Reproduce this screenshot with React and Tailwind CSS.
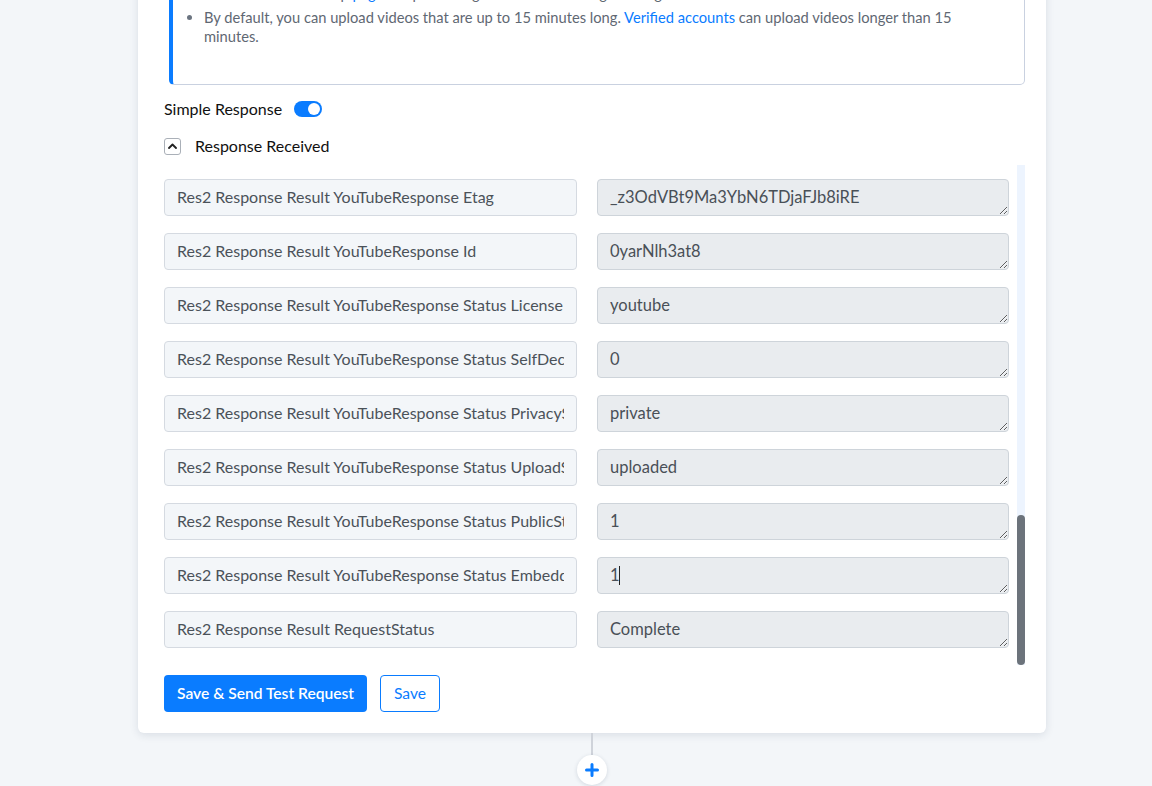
import React from "react";

const rows = [
  ["Res2 Response Result YouTubeResponse Etag", "_z3OdVBt9Ma3YbN6TDjaFJb8iRE"],
  ["Res2 Response Result YouTubeResponse Id", "0yarNlh3at8"],
  ["Res2 Response Result YouTubeResponse Status License", "youtube"],
  ["Res2 Response Result YouTubeResponse Status SelfDeclaredMadeForKids", "0"],
  ["Res2 Response Result YouTubeResponse Status PrivacyStatus", "private"],
  ["Res2 Response Result YouTubeResponse Status UploadStatus", "uploaded"],
  ["Res2 Response Result YouTubeResponse Status PublicStatsViewable", "1"],
  ["Res2 Response Result YouTubeResponse Status Embeddable", "1", true],
  ["Res2 Response Result RequestStatus", "Complete"],
];

const font = { fontFamily: "Lato, 'Open Sans', sans-serif" };

function Row({ label, value, caret }) {
  return (
    <div className="flex gap-[20px]">
      <input
        readOnly
        value={label}
        className="h-[37px] w-[413px] shrink-0 rounded-[4px] border border-[#d5dae1] bg-[#f3f6f9] px-[12px] pb-[2px] text-[16px] text-[#4b5259] outline-none"
        style={font}
      />
      <div className="relative">
        <textarea
          readOnly
          value={value}
          rows={1}
          className="block h-[37px] w-[412px] rounded-[4px] border border-[#ced4da] bg-[#e9ecef] px-[12px] py-[7px] text-[16.5px] leading-[21px] text-[#495057] outline-none"
          style={font}
        />
        {caret && (
          <span className="absolute left-[22px] top-[9px] h-[19px] w-px bg-[#222]" />
        )}
      </div>
    </div>
  );
}

export default function App() {
  return (
    <div className="min-h-[786px] overflow-hidden bg-[#f3f6f9]" style={font}>
      <div className="relative ml-[138px] -mt-[47px] w-[908px]">
        <div className="rounded-b-[6px] bg-white pb-[21px] pl-[26px] pr-[21px] pt-[20px] shadow-[0_2px_8px_rgba(30,50,80,0.12)]">
          {/* notice box */}
          <div className="ml-[5px] rounded-[5px] border border-l-[4px] border-[#c9d1e0] border-l-[#0a7cff] pb-[38px] pl-[15px] pr-[20px] pt-[10px] text-[14.7px] leading-[19px] text-[#5f6873]">
            <ul className="list-disc pl-[16px] marker:text-[#6b7480]">
              <li className="mb-[5px]">
                Visit the YouTube Help <span className="text-[#0a7cff]">page</span> to upload longer videos and change settings.
              </li>
              <li className="w-[780px]">
                By default, you can upload videos that are up to 15 minutes long.{" "}
                <span className="text-[#0a7cff]">Verified accounts</span> can upload videos longer than 15 minutes.
              </li>
            </ul>
          </div>

          <div className="mt-[14px] flex h-[20px] items-center gap-[12px] text-[16px] text-[#111]">
            <span>Simple Response</span>
            <span className="flex h-[16px] w-[28px] items-center justify-end rounded-full bg-[#0a7cff] pr-[2px]">
              <span className="h-[12px] w-[12px] rounded-full bg-white" />
            </span>
          </div>

          <div className="mt-[18px] flex h-[18px] items-center gap-[14px] text-[16px] text-[#111]">
            <span className="flex h-[17px] w-[17px] items-center justify-center rounded-[3px] border border-[#aab0b8] bg-white">
              <svg width="9" height="6" viewBox="0 0 9 6" fill="none">
                <path d="M1 5 L4.5 1.5 L8 5" stroke="#222" strokeWidth="1.8" strokeLinecap="round" strokeLinejoin="round" />
              </svg>
            </span>
            <span>Response Received</span>
          </div>

          {/* response list with scrollbar */}
          <div className="mt-[10px] flex h-[500px] gap-[8px]">
            <div className="flex flex-col gap-[17px] overflow-hidden pt-[14px]">
              {rows.map(([l, v, c]) => (
                <Row key={l} label={l} value={v} caret={c} />
              ))}
            </div>
            <div className="flex w-[8px] flex-col justify-end bg-[#edf4fe]">
              <div className="h-[150px] rounded-full bg-[#6c737b]" />
            </div>
          </div>

          <div className="mt-[10px] flex gap-[13px]">
            <button className="h-[37px] rounded-[4px] bg-[#0a7cff] px-[13px] text-[15.6px] font-semibold text-white">
              Save &amp; Send Test Request
            </button>
            <button className="h-[37px] rounded-[4px] border border-[#0a7cff] bg-white px-[13px] text-[15.6px] text-[#0a7cff]">
              Save
            </button>
          </div>
        </div>

        {/* connector to next step */}
        <div className="flex flex-col items-center">
          <div className="h-[22px] w-[2px] bg-[#cfd3da]" />
          <div className="flex h-[30px] w-[30px] items-center justify-center rounded-full bg-white shadow-[0_1px_4px_rgba(30,50,80,0.15)]">
            <svg width="14" height="14" viewBox="0 0 14 14">
              <path d="M7 1.5 V12.5 M1.5 7 H12.5" stroke="#0a7cff" strokeWidth="3" strokeLinecap="round" />
            </svg>
          </div>
        </div>
      </div>
    </div>
  );
}
